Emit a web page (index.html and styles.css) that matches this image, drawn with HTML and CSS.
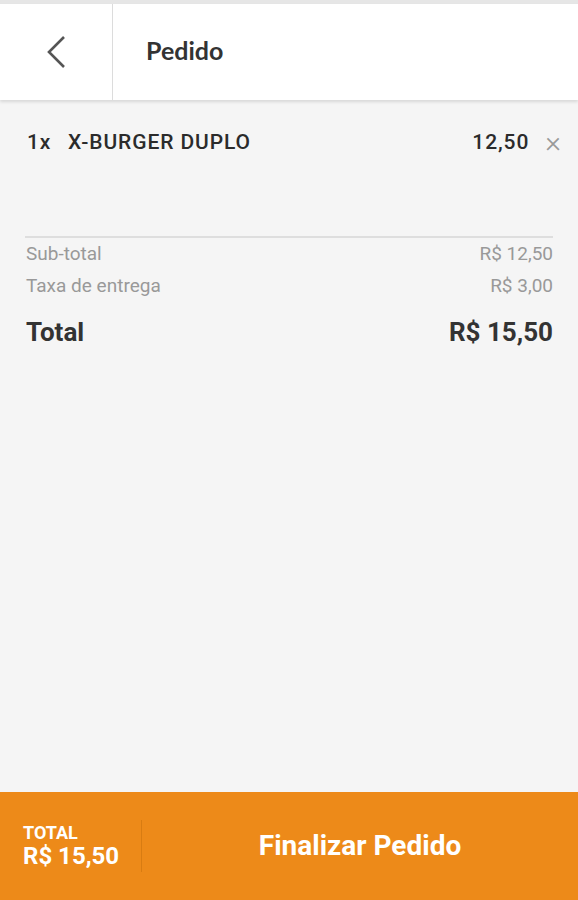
FILE: index.html
```html
<!DOCTYPE html>
<html lang="pt-BR">
<head>
  <meta charset="UTF-8">
  <meta name="viewport" content="width=device-width, initial-scale=1.0">
  <title>Pedido</title>
  <link rel="stylesheet" href="styles.css">
</head>
<body>
  <div class="app">
    <!-- Top bar -->
    <header class="topbar">
      <button class="back-btn" aria-label="Voltar">
        <svg width="22" height="34" viewBox="0 0 22 34">
          <path d="M19 2 L4 17 L19 32" fill="none" stroke="#555" stroke-width="2.6"/>
        </svg>
      </button>
      <h1 class="title">Pedido</h1>
    </header>

    <!-- Order content -->
    <main class="order">
      <ul class="items">
        <li class="item">
          <span class="qty">1x</span>
          <span class="name">X-BURGER DUPLO</span>
          <span class="price">12,50</span>
          <span class="remove">&times;</span>
        </li>
      </ul>

      <div class="summary">
        <div class="row minor"><span>Sub-total</span><span>R$ 12,50</span></div>
        <div class="row minor"><span>Taxa de entrega</span><span>R$ 3,00</span></div>
        <div class="row total"><span>Total</span><span>R$ 15,50</span></div>
      </div>
    </main>

    <!-- Checkout bar -->
    <footer class="checkout">
      <div class="checkout-total">
        <span class="label">TOTAL</span>
        <span class="value">R$ 15,50</span>
      </div>
      <button class="finish-btn">Finalizar Pedido</button>
    </footer>
  </div>
</body>
</html>
```

FILE: styles.css
```css
body {
  margin: 0;
  padding: 0;
  font-family: Roboto, "Liberation Sans", sans-serif;
  background: #f5f5f5;
}
.app {
  display: flex;
  flex-direction: column;
  height: 900px;
  border-top: 4px solid #e6e6e6;
  box-sizing: border-box;
}
.topbar {
  display: flex;
  align-items: stretch;
  height: 96px;
  background: #fff;
  box-shadow: 0 2px 3px rgba(0, 0, 0, 0.12);
  position: relative;
  z-index: 1;
}
.back-btn {
  width: 113px;
  border: none;
  border-right: 1px solid #dcdcdc;
  background: transparent;
  display: flex;
  align-items: center;
  justify-content: center;
  padding: 0;
  cursor: pointer;
}
.title {
  margin: 0;
  padding-left: 33px;
  display: flex;
  align-items: center;
  font-family: Lato, sans-serif;
  font-size: 25px;
  font-weight: 700;
  color: #333;
  padding-bottom: 4px;
}
.order {
  flex: 1;
  padding: 0 25px;
}
.items {
  list-style: none;
  margin: 0;
  padding: 28px 0 0 2px;
  height: 108px;
  border-bottom: 2px solid #dedede;
}
.item {
  display: flex;
  align-items: center;
  font-size: 21px;
  font-weight: 500;
  letter-spacing: 0.9px;
  color: #2b2b2b;
  line-height: 28px;
}
.qty {
  width: 41px;
}
.name {
  flex: 1;
}
.price {
  margin-right: 16px;
}
.remove {
  font-size: 30px;
  font-weight: 300;
  color: #999;
  margin-right: -8px;
  letter-spacing: 0;
}
.row {
  display: flex;
  justify-content: space-between;
  padding-left: 1px;
}
.row.minor {
  font-size: 19px;
  color: #999;
  line-height: 32px;
}
.row.total {
  margin-top: 15px;
  font-size: 26px;
  font-weight: 700;
  color: #333;
  line-height: 30px;
}
.checkout {
  height: 108px;
  background: #ed8a19;
  display: flex;
  align-items: center;
  color: #fff;
}
.checkout-total {
  width: 118px;
  padding-left: 23px;
  height: 52px;
  border-right: 1px solid #d87c12;
  display: flex;
  flex-direction: column;
  justify-content: center;
  font-weight: 700;
}
.checkout-total .label {
  font-size: 18px;
  line-height: 20px;
}
.checkout-total .value {
  font-size: 24px;
  line-height: 26px;
}
.finish-btn {
  flex: 1;
  border: none;
  background: transparent;
  color: #fff;
  font-family: Roboto, sans-serif;
  font-size: 28px;
  font-weight: 700;
  cursor: pointer;
  padding: 0 0 2px 0;
}
```
